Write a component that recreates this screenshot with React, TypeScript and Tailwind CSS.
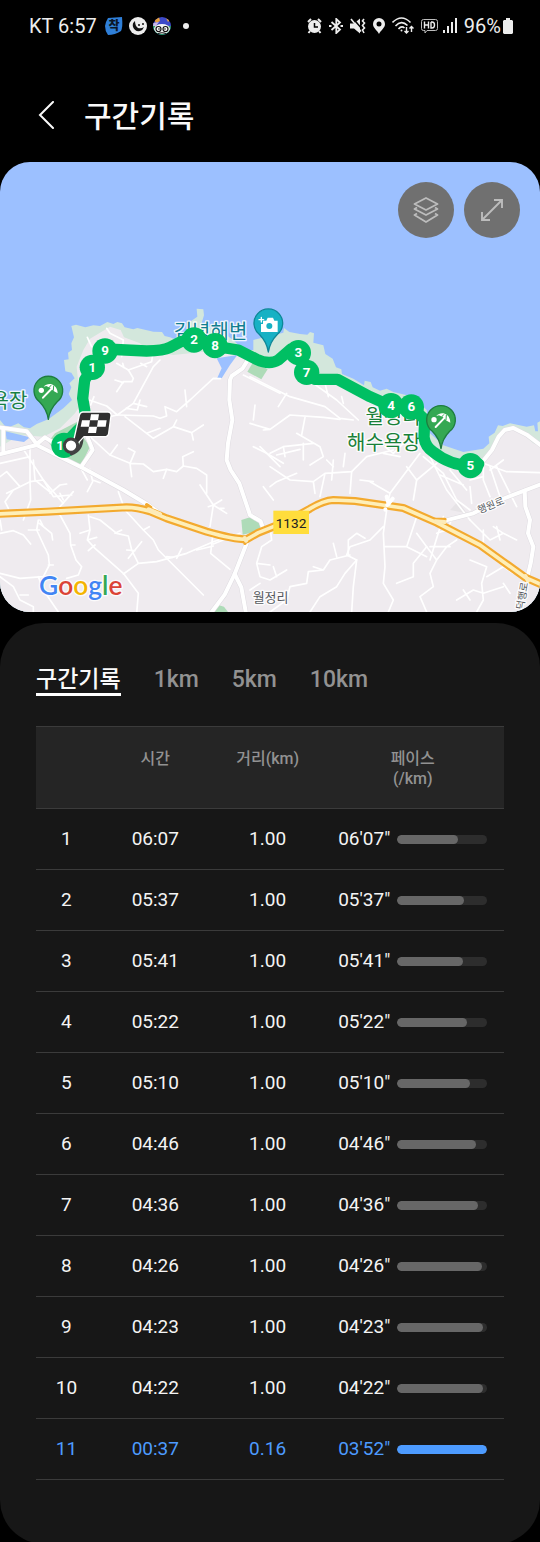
import { FC, ReactNode, useState } from "react";
import clsx from "clsx";

interface LapProps {
  no: number;
  time: string;
  distance: string;
  pace: string;
  level: number;
  active?: boolean;
}

const laps: LapProps[] = [
  { no: 1, time: "06:07", distance: "1.00", pace: "06'07\"", level: 68 },
  { no: 2, time: "05:37", distance: "1.00", pace: "05'37\"", level: 74 },
  { no: 3, time: "05:41", distance: "1.00", pace: "05'41\"", level: 73 },
  { no: 4, time: "05:22", distance: "1.00", pace: "05'22\"", level: 77 },
  { no: 5, time: "05:10", distance: "1.00", pace: "05'10\"", level: 81 },
  { no: 6, time: "04:46", distance: "1.00", pace: "04'46\"", level: 87 },
  { no: 7, time: "04:36", distance: "1.00", pace: "04'36\"", level: 90 },
  { no: 8, time: "04:26", distance: "1.00", pace: "04'26\"", level: 94 },
  { no: 9, time: "04:23", distance: "1.00", pace: "04'23\"", level: 95 },
  { no: 10, time: "04:22", distance: "1.00", pace: "04'22\"", level: 95 },
  { no: 11, time: "00:37", distance: "0.16", pace: "03'52\"", level: 100, active: true },
];

const tabs = ["구간기록", "1km", "5km", "10km"];

/* ---------- Map data, three units to a pixel ---------- */

const coast =
  "M0 360 20 385 55 370 72 382 90 385 110 372 145 358 190 325 216 300 206 282 214 262 208 250 224 235 214 218 196 214 192 180 206 178 204 158 216 150 214 130 222 112 214 78 228 74 256 82 280 76 300 78 322 66 340 72 352 66 366 70 374 82 400 88 412 84 460 95 486 96 494 108 510 112 530 120 560 90 560 72 592 50 590 26 610 28 612 46 604 72 660 92 700 120 730 150 760 150 760 120 850 98 852 84 868 96 900 102 922 104 930 96 942 100 940 128 970 136 976 162 998 176 1008 202 1024 208 1026 222 1060 236 1092 256 1094 242 1112 246 1118 262 1140 272 1160 266 1180 276 1240 290 1280 330 1290 400 1330 436 1390 456 1450 446 1468 430 1466 410 1484 398 1494 376 1508 378 1530 370 1580 380 1602 376 1606 394 1614 394 1612 368 1620 364V936H0Z";
const land =
  "M0 440 60 405 130 410 180 385 225 340 250 300 235 250 230 200 250 150 270 116 330 80 362 90 372 112 420 130 440 150 520 165 660 150 740 170 800 180 860 160 900 180 950 232 1030 240 1170 310 1265 340 1275 420 1330 480 1400 495 1450 476 1490 424 1512 388 1545 382 1600 430 1620 436V936H0Z";

const route =
  "M190 436 232 392 258 368 254 330 248 295 254 240 277 202 315 147 440 153 Q490 152 510 142 L545 124 582 120 645 139 715 150 770 178 Q808 196 835 180 L872 148 895 158 920 217 945 238 H1012 L1110 290 1173 318 1234 321 1274 358 1272 412 Q1276 440 1300 456 Q1350 496 1411 497 L1436 492";

const highway =
  "M-10 642 140 635 380 622 Q410 622 450 634 L500 655 620 695 Q700 718 740 718 L775 698 820 680 860 665 930 626 Q970 602 1000 600 L1065 603 1210 624 1310 668 1440 735 1510 785 1575 832 1630 856";

const streets = [
  "M-5 464 110 435 180 470 250 505 370 570 440 612 480 640",
  "M244 500 278 450 262 410",
  "M-5 382 80 394 112 434",
  "M10 385V458",
  "M108 434 135 412 160 428",
  "M742 182 728 205 695 228 690 240 688 300 697 360 684 430 680 480 692 510 718 550 750 645 782 664 792 692",
  "M740 730 704 822 674 884 632 940",
  "M704 822 724 862 738 940",
  "M1335 662 1420 640 1500 600 1625 552",
  "M1574 572 1576 620 1590 660 1584 700 1600 740 1592 790 1582 832",
  "M1450 482 1476 450 1496 410 1514 390 1540 384 1580 404 1625 438",
];

const westLanes = [
  "M262 112 275 140 M320 85 330 100 370 120 365 170 M350 190 385 210 400 235 396 245 M372 203 368 190 M396 245 370 245 350 275",
  "M385 210 455 185 460 150 M422 190 440 200 M345 240 370 248",
  "M268 300 320 318 352 345 290 358 262 385 M282 290 272 315 M352 345 400 310 460 200 480 180 M378 325 412 330 420 300 M400 310 440 320",
  "M352 345 460 348 480 355 500 348 495 320 530 335 570 300 640 235 662 236 M555 270 560 320",
  "M375 350 440 400 460 415 520 380 530 360 M520 380 575 398 610 375 M440 400 480 385 M575 398 580 420",
  "M270 410 330 465 390 490 405 455 385 445 M390 490 395 530 M330 465 352 435 M390 490 430 492 460 515 500 508 530 515 550 498 590 505 620 525 620 580",
  "M500 508 490 535 M550 498 548 470 580 455 M600 555 640 615 630 680 M640 615 680 640 M640 615 665 600 M640 615 625 620 M660 625 672 625",
  "M0 490 90 470 M90 440 90 545 40 570 15 605 25 625 M40 570 20 580 M65 440 130 540 190 610 M90 545 130 540 M0 530 20 515 60 560",
  "M100 480 105 540 155 580 M130 540 160 590 215 585 M150 580 180 555 200 552 M180 620 220 575 M190 600 180 580",
  "M90 545 92 600 70 660 M115 660 110 690 145 765 148 795 130 830 60 835 0 820 M145 795 160 795 M118 670 155 700 158 720 M130 680 120 660",
  "M0 700 40 692 70 705 92 732 M180 645 210 700 212 735 228 780 245 800 235 825 200 835 M212 735 225 735",
  "M265 645 270 690 262 720 M270 690 240 700 M262 720 285 745 370 820 415 880 410 940 M285 735 265 752 M262 720 290 712",
  "M270 650 300 660 350 700 385 708 395 750 415 790 370 822 M345 700 365 690 M385 775 425 725 M380 750 405 752 M415 790 470 785 560 760 640 725 700 705",
  "M355 575 375 630 430 690 460 720 475 750 610 885 M430 690 448 680 M500 770 518 772 M530 775 545 745",
  "M640 690 632 760 690 808 M590 750 640 738 M720 700 640 732",
  "M270 508 278 545 262 575 M278 540 300 548 M0 830 40 860 60 900 100 920 100 940 M60 885 85 885 M115 830 130 870 175 936 M85 690 118 690",
  "M240 500 262 540 M730 225 840 280 M0 660 5 690 M780 440 840 500",
];

const eastLanes = [
  "M-60 230 60 290 165 320 210 355 250 360 M50 280 25 320 M130 250 200 300 265 360 M165 250 175 290 M215 290 220 310",
  "M-60 370 0 388 60 345 160 352 210 358 M105 352 95 405 M0 388 -20 390 M-45 315 -50 360",
  "M0 460 40 440 130 430 M40 440 45 470 M20 465 90 448 M80 400 150 440 160 470 120 495",
  "M0 500 60 540 130 545 165 520 245 515 290 470 370 450 M165 520 150 590 M190 480 185 540 M220 500 225 460 M130 545 135 580",
  "M0 560 20 545 80 520 M245 515 240 580 M270 540 310 545 M250 430 300 420 M170 480 190 500",
  "M-50 440 -10 460 40 490 M-20 560 10 600 M100 480 100 430 M260 400 280 450 M340 460 390 470",
  "M450 460 360 580 300 545 M360 580 350 620 M410 500 440 540 430 600 M400 430 370 460 345 440 M480 470 530 570 600 660",
  "M460 470 520 520 560 600 600 630 M500 490 440 540 M510 525 580 555 M540 510 590 570 M640 480 640 540 660 590 M660 500 690 590 M600 560 605 610",
  "M640 490 710 515 810 518 M700 480 660 510 M640 530 600 540 M680 500 740 620",
  "M350 630 340 700 345 800 340 850 370 900 355 936 M340 680 300 720 240 740 230 765 260 780 250 860 245 936",
  "M235 765 235 720 260 700 285 715 M240 765 180 780 160 810 115 815 110 850 60 860 50 900 0 936 M160 810 130 800 M200 770 190 730",
  "M260 780 225 820 200 860 150 890 120 936 M345 740 410 740 440 650 M440 700 470 740 430 790 430 830 380 850 M410 740 470 770",
  "M470 740 500 780 480 820 490 860 450 890 470 936 M500 780 530 740 560 720 M500 700 530 690 545 660 M480 740 540 740",
  "M600 780 650 800 635 850 640 900 620 936 M650 830 700 800 730 820 M560 900 610 870 640 880 700 860 M580 870 600 900",
  "M600 660 660 720 700 700 740 720 M640 690 640 730 M680 680 690 720 M670 680 700 700 M700 850 720 880 M520 650 480 780",
  "M0 680 5 720 -25 740 -40 790 -30 830 0 840 50 810 M20 830 10 800 M-40 790 0 795 M-30 850 -60 870",
];

const markers = [
  { label: "10", x: 192, y: 436 },
  { label: "9", x: 315, y: 153 },
  { label: "1", x: 277, y: 202 },
  { label: "8", x: 645, y: 137 },
  { label: "2", x: 582, y: 120 },
  { label: "3", x: 895, y: 158 },
  { label: "7", x: 920, y: 217 },
  { label: "4", x: 1173, y: 317 },
  { label: "6", x: 1234, y: 321 },
  { label: "5", x: 1411, y: 497 },
];

interface PinProps {
  x: number;
  y: number;
  fill: string;
  stroke: string;
  children: ReactNode;
}

const Pin: FC<PinProps> = ({ x, y, fill, stroke, children }) => (
  <g transform={`translate(${x} ${y})`}>
    <path
      d="M0 86C-4 58-14 46-26 34A43 43 0 1 1 26 34C14 46 4 58 0 86Z"
      fill={fill}
      stroke={stroke}
      strokeWidth="4"
    />
    {children}
  </g>
);

const Umbrella = () => (
  <g>
    <circle cx="-21" cy="-1" r="8" fill="#fff" />
    <path d="M-14-12C-2-26 22-22 27 0L28 8 17 2 6-8-6-14Z" fill="#fff" />
    <path d="M8-16 1-8M16-14 15-1" stroke="#34a853" strokeWidth="3" />
    <path d="M9-5-16 21" stroke="#fff" strokeWidth="6" />
  </g>
);

const RouteMap = () => (
  <svg
    viewBox="0 -414 1620 1350"
    className="block w-full h-auto"
    fill="none"
    strokeLinecap="round"
    strokeLinejoin="round"
  >
    <rect y="-414" width="1620" height="1350" fill="#9cc0ff" />
    <path d={coast} fill="#d3e7dc" />
    <path d={land} fill="#efebef" />

    {/* Water inlets */}
    <path d="M650 175 712 165 690 195 665 235 650 238 665 205Z" fill="#9cc0ff" />
    <path d="M16 394 50 402 90 412 72 426 20 418Z" fill="#9cc0ff" />

    {/* Parks */}
    <g fill="#aedbb8">
      <path d="M145 425 165 400 232 365 250 412 270 440 242 498 170 462Z" />
      <path d="M760 185 803 208 784 238 742 215Z" />
      <path d="M724 660 750 652 782 664 780 692 728 704Z" />
      <path d="M640 936 655 915 672 920 684 936Z" />
    </g>
    <path d="M1350 630 1376 602 1400 640Z" fill="#e6e3e6" />

    {/* Roads */}
    <g stroke="#fff" strokeWidth="5">
      {westLanes.map((d) => (
        <path key={d} d={d} />
      ))}
      <g transform="translate(810 0)">
        {eastLanes.map((d) => (
          <path key={d} d={d} />
        ))}
      </g>
    </g>
    {streets.map((d) => (
      <path key={d} d={d} stroke="#dedbe0" strokeWidth="15" />
    ))}
    {streets.map((d) => (
      <path key={d} d={d} stroke="#fff" strokeWidth="12" />
    ))}
    <path d={highway} stroke="#f3aa2f" strokeWidth="24" />
    <path d="M1290 658H1335M735 730 742 712M440 614 452 622" stroke="#f3aa2f" strokeWidth="10" />
    <path d={highway} stroke="#feefb8" strokeWidth="11" />
    <path d="M446 628 480 642M1306 664 1334 666M738 722 734 714M1576 828 1584 842" stroke="#fdebb8" strokeWidth="12" />
    <path d="M1160 590 1166 612M1178 596 1162 615M1156 628V629" stroke="#fff" strokeWidth="12" />

    {/* Place names */}
    <g
      fontFamily="Roboto, 'Noto Sans CJK KR', sans-serif"
      strokeWidth="8"
      paintOrder="stroke"
      stroke="#ffffffd9"
    >
      <g fontSize="60" fontWeight="400" textAnchor="end">
        <text x="82" y="324" fill="#188045">욕장</text>
        <text x="742" y="118" fill="#127f91">김녕해변</text>
        <text x="1262" y="372" fill="#188038">월정리</text>
        <text x="1262" y="449" fill="#188038">해수욕장</text>
      </g>
      <text x="758" y="906" fontSize="39" fill="#565a5f">월정리</text>
      <text fontSize="30" fill="#565a5f" transform="translate(1438 641) rotate(-22)">행원로</text>
      <text fontSize="30" fill="#565a5f" transform="translate(1570 930) rotate(-80)">덕행로</text>
    </g>

    <rect x="820" y="632" width="107" height="70" fill="#ffdd3c" />
    <text x="873" y="684" fontSize="41" textAnchor="middle" fill="#202124" fontFamily="Roboto, sans-serif">
      1132
    </text>

    <Pin x={145} y={272} fill="#34a853" stroke="#1d7d3f">
      <Umbrella />
    </Pin>
    <Pin x={805} y={70} fill="#17b1c4" stroke="#0e8797">
      <path d="M-16-8H-6L-2-17H14L18-8H28V26H-22V2H-16Z" fill="#fff" />
      <circle cx="3" cy="8" r="9" fill="#17b1c4" />
      <path d="M-21-18V-4M-28-11H-14" stroke="#fff" strokeWidth="4" />
    </Pin>

    {/* Running route */}
    <path d={route} stroke="#00bf63" strokeWidth="34" />
    <path d="M1430 475 1453 486 1436 512Z" fill="#00bf63" />
    {markers.map(({ label, x, y }) => (
      <g key={label}>
        <circle cx={x} cy={y} r="38" fill="#00bf63" />
        <text
          x={x}
          y={y + 13}
          fontSize="40"
          fontWeight="700"
          textAnchor="middle"
          fill="#fff"
          fontFamily="Roboto, sans-serif"
        >
          {label}
        </text>
      </g>
    ))}
    <Pin x={1323} y={360} fill="#34a853" stroke="#1d7d3f">
      <Umbrella />
    </Pin>

    {/* Finish flag */}
    <path d="M246 412Q246 452 214 462" stroke="#424242" strokeWidth="9" />
    <path
      d="M248 336H324Q334 337 333 347L326 400Q324 410 314 410H252L228 436 220 426 238 346Q240 337 248 336Z"
      fill="#303030"
      stroke="#fff"
      strokeWidth="4"
    />
    <path
      d="M273 343H297L294 361H270ZM246 361H270L267 380H242ZM294 361H320L317 380H291ZM267 380H291L288 399H264Z"
      fill="#fff"
    />
    <circle cx="213" cy="437" r="20" fill="#fff" stroke="#424242" strokeWidth="9" />

    <text
      x="117"
      y="886"
      fontSize="79"
      fontFamily="Lato, sans-serif"
      fontWeight="600"
      stroke="#ffffffcc"
      strokeWidth="8"
      paintOrder="stroke"
    >
      <tspan fill="#4285f4">G</tspan>
      <tspan fill="#db4437">o</tspan>
      <tspan fill="#f4b400">o</tspan>
      <tspan fill="#4285f4">g</tspan>
      <tspan fill="#34a853">l</tspan>
      <tspan fill="#db4437">e</tspan>
    </text>
  </svg>
);

const StatusBar = () => (
  <div className="flex items-center justify-between h-[51px] pl-[29px] pr-[27px] text-xl text-[#ededed]">
    <div className="flex items-center gap-[6px]">
      <span className="mr-[2px]">KT 6:57</span>
      <svg width="18" height="18" viewBox="0 0 18 18">
        <path d="M3 1 17 0Q18 10 16 14Q10 18 3 18Q0 14 0 9Q1 4 3 1Z" fill="#2f7fd8" />
        <text x="9" y="13" fontSize="12" fontWeight="900" textAnchor="middle" fill="#0b1626" fontFamily="'Noto Sans CJK KR', sans-serif">
          착
        </text>
      </svg>
      <svg width="18" height="18" viewBox="0 0 18 18">
        <circle cx="9" cy="9" r="9" fill="#ededed" />
        <path d="M6 4Q3 6 4 10Q6 15 11 14Q14 13 15 10Q12 12 9 11Q6 9 6 4Z" fill="#111" />
        <circle cx="10" cy="8" r="1" fill="#111" />
        <circle cx="14" cy="7" r="1" fill="#111" />
      </svg>
      <svg width="18" height="18" viewBox="0 0 18 18">
        <clipPath id="app-badge">
          <circle cx="9" cy="9" r="9" />
        </clipPath>
        <g clipPath="url(#app-badge)">
          <rect width="18" height="18" fill="#3d49c8" />
          <path d="M1 3 6 0 7 4 3 6ZM13 1 17 3 15 5Z" fill="#e8a13c" />
          <path d="M0 6 6 5 3 9 0 10Z" fill="#c9b8ea" />
          <rect y="9" width="18" height="9" fill="#239a58" />
          <ellipse cx="9" cy="12" rx="8" ry="5" fill="#f5f5f5" />
          <g fill="#fff" stroke="#111" strokeWidth="1.2">
            <circle cx="5.5" cy="12" r="2.5" />
            <circle cx="12.5" cy="12" r="2.5" />
            <path d="M5 16.500Q9 15 13 16.500" />
          </g>
          <circle cx="6" cy="12" r="0.8" fill="#111" />
          <circle cx="12" cy="12" r="0.8" fill="#111" />
        </g>
      </svg>
      <span className="w-[6px] h-[6px] ml-[6px] rounded-full bg-[#ededed]" />
    </div>

    <div className="flex items-center gap-[7px]">
      {/* Alarm */}
      <svg width="15" height="16" viewBox="0 0 15 16" fill="none" stroke="#ededed" strokeWidth="2">
        <circle cx="7.5" cy="8.5" r="6.5" fill="#ededed" stroke="none" />
        <path d="M1 4 4 1M14 4 11 1M3 13 1.5 15M12 13 13.5 15" />
        <path d="M7.5 5V9H11" stroke="#000" strokeWidth="1.5" />
      </svg>
      {/* Bluetooth */}
      <svg width="14" height="16" viewBox="0 0 14 16" fill="none" stroke="#ededed" strokeWidth="1.8">
        <path d="M2.5 4 11 11.5 7.3 15V1L11 4.5 2.5 12" />
        <path d="M0 8H2.5M11.5 8H14" strokeWidth="2.2" />
      </svg>
      {/* Muted */}
      <svg width="16" height="16" viewBox="0 0 16 16" fill="none" stroke="#ededed" strokeWidth="1.6">
        <path d="M0 5.5H4L10 0.5V15.5L4 10.5H0Z" fill="#ededed" stroke="none" />
        <path d="M3 0.5 13 12" stroke="#000" strokeWidth="1.5" />
        <path d="M1 1 11 13.5" />
        <path d="M14 1 12.5 3 14.5 5 12.5 7.5 14.5 10 12.5 12 14 15" />
      </svg>
      {/* Location */}
      <svg width="12" height="16" viewBox="0 0 12 16">
        <path
          d="M6 0A6 6 0 0 1 12 6C12 10 8 12 6 16 4 12 0 10 0 6A6 6 0 0 1 6 0ZM6 3.5A2.5 2.5 0 1 0 6 8.5 2.5 2.5 0 0 0 6 3.5Z"
          fill="#ededed"
          fillRule="evenodd"
        />
      </svg>
      {/* Wi-Fi */}
      <svg width="22" height="17" viewBox="0 0 22 17" fill="none" stroke="#ededed" strokeWidth="1.6">
        <path d="M0.5 5.5Q9.5-3.5 18.5 5.5M3.5 9Q9.5 2.5 15.5 8.5M6.5 12Q9.5 8.5 12.5 11" />
        <circle cx="9.5" cy="13.5" r="1" fill="#ededed" stroke="none" />
        <path d="M14.5 10V16M12.5 14 14.5 16 16.5 14M19.5 15V9.5M17.5 11.5 19.5 9.5 21.5 11.5" strokeWidth="1.4" />
      </svg>
      {/* HD voice */}
      <svg width="17" height="16" viewBox="0 0 17 16" fill="none" stroke="#bdbdbd">
        <path d="M2.5 1.5H14.5Q16.5 1.5 16.5 3.5V10.5Q16.5 12.5 14.5 12.5H6L4 15V12.5H2.5Q0.5 12.5 0.5 10.5V3.5Q0.5 1.5 2.5 1.5Z" />
        <path d="M3.5 3.5V10.5M3.5 7H7.5M7.5 3.5V10.5M10 4V10H11Q13.5 10 13.5 7T11 4H10" stroke="#ededed" strokeWidth="1.4" />
      </svg>
      {/* Signal */}
      <svg width="14" height="15" viewBox="0 0 14 15" fill="#ededed" className="-ml-[2px]">
        <path d="M0 12H2V15H0ZM4 8H6V15H4ZM8 4H10V15H8ZM12 0H14V15H12Z" />
      </svg>
      <span className="flex items-center gap-[2px]">
        96%
        <svg width="10" height="16" viewBox="0 0 10 16" fill="#ededed">
          <path d="M3 0H7V2H9L10 3V15L9 16H1L0 15V3L1 2H3Z" />
        </svg>
      </span>
    </div>
  </div>
);

const MapButtons = () => (
  <div className="absolute top-5 right-5 flex gap-[10px]">
    <button
      aria-label="지도 유형"
      className="w-14 h-14 rounded-full bg-[#707070] flex justify-center items-center"
    >
      <svg width="26" height="26" viewBox="0 0 26 26" fill="none" stroke="#bcbcbc" strokeWidth="1.8" strokeLinejoin="round">
        <path d="M1.5 7 13 1 24.5 7 13 13Z" />
        <path d="M4 10.5 1.5 12 13 18 24.5 12 22 10.5" />
        <path d="M4 16.500 1.5 18 13 25 24.5 18 22 16.500" />
      </svg>
    </button>
    <button
      aria-label="전체 화면"
      className="w-14 h-14 rounded-full bg-[#707070] flex justify-center items-center"
    >
      <svg width="24" height="24" viewBox="0 0 24 24" fill="none" stroke="#bcbcbc" strokeWidth="1.9">
        <path d="M14 2H22V10M2 14V22H10M22 2 2 22" />
      </svg>
    </button>
  </div>
);

const LapRow: FC<LapProps> = ({ no, time, distance, pace, level, active }) => (
  <tr className={clsx("h-[61px] border-b border-[#3b3b3b]", active ? "text-[#4d9bff]" : "text-[#f4f4f4]")}>
    <td>{no}</td>
    <td>{time}</td>
    <td>{distance}</td>
    <td>
      <div className="flex justify-center items-center gap-[7px]">
        <span>{pace}</span>
        <span className="w-[90px] h-[9px] rounded-full bg-[#2d2d2d] overflow-hidden">
          <span
            className={clsx("block h-full rounded-full", active ? "bg-[#4d9bff]" : "bg-[#676767]")}
            style={{ width: `${level}%` }}
          />
        </span>
      </div>
    </td>
  </tr>
);

const App = () => {
  const [tab, setTab] = useState(tabs[0]);

  return (
    <main className="min-h-screen flex flex-col bg-black font-[Roboto,'Noto_Sans_CJK_KR',sans-serif]">
      <StatusBar />

      {/* Title */}
      <header className="flex items-center h-[111px] pt-4 pl-9 gap-7 text-[#fafafa]">
        <button aria-label="뒤로">
          <svg width="20" height="28" viewBox="0 0 20 28" fill="none" stroke="currentColor" strokeWidth="2" strokeLinecap="round">
            <path d="M17 1 4 14 17 27" />
          </svg>
        </button>
        <h1 className="pt-1 text-[30px] leading-10 font-medium">구간기록</h1>
      </header>

      {/* Map */}
      <section className="relative rounded-[30px] overflow-hidden">
        <RouteMap />
        <MapButtons />
      </section>

      {/* Lap records */}
      <section className="grow mt-[11px] px-9 pt-9 pb-16 rounded-[44px] bg-[#171717]">
        <nav className="flex gap-[33px] text-[23px] font-medium">
          {tabs.map((name) => (
            <button
              key={name}
              onClick={() => setTab(name)}
              className={clsx(
                "h-[37px] pt-1 border-b-3 cursor-pointer",
                tab === name ? "text-[#fafafa] border-white" : "text-[#929292] border-transparent"
              )}
            >
              {name}
            </button>
          ))}
        </nav>

        <table className="w-full mt-[30px] table-fixed text-center text-[19px]">
          <thead>
            <tr className="h-[82px] align-top border-y border-[#3b3b3b] bg-[#252525] text-base leading-5 text-[#929292]">
              <th className="w-[13%]" />
              <th className="w-[25%] pt-[22px] font-medium">시간</th>
              <th className="w-[23%] pt-[22px] font-medium">거리(km)</th>
              <th className="w-[39%] pt-[22px] font-medium">
                페이스
                <br />
                (/km)
              </th>
            </tr>
          </thead>
          <tbody>
            {laps.map((lap) => (
              <LapRow key={lap.no} {...lap} />
            ))}
          </tbody>
        </table>
      </section>
    </main>
  );
};

export default App;
